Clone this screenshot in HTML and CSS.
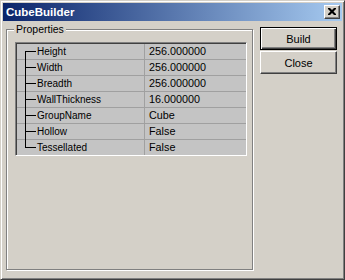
FILE: index.html
```html
<!DOCTYPE html>
<html lang="en">
    <head>
        <meta charset="utf-8" />
        <title>CubeBuilder</title>
        <link rel="stylesheet" href="styles.css">
    </head>

    <body>
        <div class="window">
            <div class="titlebar">
                <span class="title">CubeBuilder</span>
                <div class="close-box">
                    <svg width="8" height="7" viewBox="0 0 8 7">
                        <path d="M0 0h2l2 2 2-2h2v1l-2.5 2.5 2.5 2.5v1h-2l-2-2-2 2h-2v-1l2.5-2.5-2.5-2.5z" fill="#000"/>
                    </svg>
                </div>
            </div>

            <div class="client">
                <div class="group">
                    <span class="legend">Properties</span>
                    <div class="grid">
                        <div class="row first"><div class="name">Height</div><div class="value">256.000000</div></div>
                        <div class="row"><div class="name">Width</div><div class="value">256.000000</div></div>
                        <div class="row"><div class="name">Breadth</div><div class="value">256.000000</div></div>
                        <div class="row"><div class="name">WallThickness</div><div class="value">16.000000</div></div>
                        <div class="row"><div class="name">GroupName</div><div class="value">Cube</div></div>
                        <div class="row"><div class="name">Hollow</div><div class="value">False</div></div>
                        <div class="row last"><div class="name">Tessellated</div><div class="value">False</div></div>
                    </div>
                </div>

                <div class="buttons">
                    <button class="btn default">Build</button>
                    <button class="btn">Close</button>
                </div>
            </div>
        </div>
    </body>
</html>
```

FILE: styles.css
```css
html, body {
    margin: 0;
    padding: 0;
    background: #d4d0c8;
}
body {
    font-family: "Liberation Sans", Arial, sans-serif;
    font-size: 10px;
    color: #000;
}
.window {
    box-sizing: border-box;
    width: 345px;
    height: 280px;
    background: #d4d0c8;
    border-top: 1px solid #d4d0c8;
    border-left: 1px solid #d4d0c8;
    border-right: 1px solid #404040;
    border-bottom: 1px solid #404040;
    box-shadow: inset 1px 1px 0 #fff, inset -1px -1px 0 #808080;
    padding: 2px;
}
.titlebar {
    height: 18px;
    display: flex;
    align-items: center;
    justify-content: space-between;
    padding: 0 2px 0 3px;
    background: linear-gradient(to right, #0a246a, #a6caf0);
}
.title {
    color: #fff;
    font-weight: bold;
    font-size: 11.5px;
}
.close-box {
    box-sizing: border-box;
    width: 16px;
    height: 14px;
    display: flex;
    align-items: center;
    justify-content: center;
    background: #d4d0c8;
    border-top: 1px solid #fff;
    border-left: 1px solid #fff;
    border-right: 1px solid #404040;
    border-bottom: 1px solid #404040;
    box-shadow: inset -1px -1px 0 #808080;
}
.close-box svg {
    display: block;
    margin: 0 1px 1px 0;
}
.client {
    display: flex;
    align-items: flex-start;
    padding-left: 3px;
}
.group {
    position: relative;
    box-sizing: border-box;
    width: 247px;
    height: 241px;
    margin-top: 8px;
    padding: 12px 0 0 8px;
    border: 1px solid #808080;
    box-shadow: inset 1px 1px 0 #fff, 1px 1px 0 #fff;
}
.legend {
    position: absolute;
    top: -7px;
    left: 7px;
    padding: 0 2px;
    line-height: 12px;
    font-size: 10.5px;
    background: #d4d0c8;
}
.grid {
    width: 232px;
    box-sizing: border-box;
    border-top: 1px solid #808080;
    border-left: 1px solid #808080;
    border-right: 1px solid #fff;
    border-bottom: 1px solid #fff;
    box-shadow: inset 1px 1px 0 #404040;
    padding: 1px 0 0 1px;
    background: #c4c4c4;
}
.row {
    display: flex;
    height: 15px;
    line-height: 15px;
    border-bottom: 1px solid #a0a0a0;
}
.row.last {
    border-bottom: none;
}
.name {
    position: relative;
    width: 107px;
    padding-left: 20px;
    border-right: 1px solid #a0a0a0;
}
.name::before {
    content: "";
    position: absolute;
    left: 8px;
    top: 0;
    bottom: -1px;
    border-left: 1px solid #000;
}
.first .name::before {
    top: 7px;
}
.last .name::before {
    bottom: 7px;
}
.name::after {
    content: "";
    position: absolute;
    left: 8px;
    top: 7px;
    width: 11px;
    border-top: 1px solid #000;
}
.value {
    padding-left: 4px;
    font-size: 10.8px;
}
.buttons {
    display: flex;
    flex-direction: column;
    gap: 1px;
    margin: 6px 0 0 7px;
}
.btn {
    box-sizing: border-box;
    width: 77px;
    height: 23px;
    padding: 0;
    margin: 0;
    font-family: "Liberation Sans", Arial, sans-serif;
    font-size: 11px;
    color: #000;
    background: #d4d0c8;
    border-top: 1px solid #fff;
    border-left: 1px solid #fff;
    border-right: 1px solid #404040;
    border-bottom: 1px solid #404040;
    box-shadow: inset -1px -1px 0 #808080;
}
.btn.default {
    border: 1px solid #000;
    box-shadow: inset 1px 1px 0 #fff, inset -1px -1px 0 #404040, inset -2px -2px 0 #808080;
}
```
